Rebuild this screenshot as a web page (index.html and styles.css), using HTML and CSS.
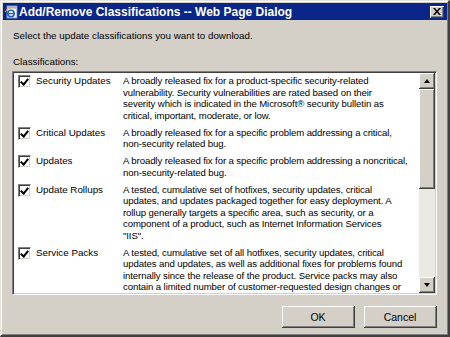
FILE: index.html
```html
<!DOCTYPE html>
<html lang="en">
<head>
    <meta charset="UTF-8">
    <title>Add/Remove Classifications -- Web Page Dialog</title>
    <link rel="stylesheet" href="styles.css">
</head>
<body>
    <div class="window">
        <div class="titlebar">
            <svg class="title-icon" width="15" height="14" viewBox="0 0 15 14">
                <rect x="3" y="1" width="10" height="12" fill="#fff" stroke="#7a8aa8"/>
                <rect x="3.5" y="1.5" width="9" height="2" fill="#9ab4dc"/>
                <circle cx="7" cy="8.5" r="3.2" fill="none" stroke="#1d5fc8" stroke-width="1.6"/>
                <path d="M4.2 8.6 H9.6" stroke="#1d5fc8" stroke-width="1.3"/>
                <path d="M1 7 C3 3 9 1 12 4" fill="none" stroke="#e8b020" stroke-width="1"/>
            </svg>
            <span class="title-text">Add/Remove Classifications -- Web Page Dialog</span>
            <button class="close-btn">
                <svg width="8" height="7" viewBox="0 0 8 7">
                    <path d="M0 0 L2 0 L4 2.5 L6 0 L8 0 L5 3.5 L8 7 L6 7 L4 4.5 L2 7 L0 7 L3 3.5 Z" fill="#000"/>
                </svg>
            </button>
        </div>
        <div class="dialog-body">
            <p class="intro">Select the update classifications you want to download.</p>
            <p class="list-label">Classifications:</p>
            <div class="listbox">
                <div class="list-rows">
                    <div class="row">
                        <span class="checkbox"></span>
                        <span class="row-name">Security Updates</span>
                        <span class="row-desc">A broadly released fix for a product-specific security-related<br>vulnerability. Security vulnerabilities are rated based on their<br>severity which is indicated in the Microsoft® security bulletin as<br>critical, important, moderate, or low.</span>
                    </div>
                    <div class="row">
                        <span class="checkbox"></span>
                        <span class="row-name">Critical Updates</span>
                        <span class="row-desc">A broadly released fix for a specific problem addressing a critical,<br>non-security related bug.</span>
                    </div>
                    <div class="row">
                        <span class="checkbox"></span>
                        <span class="row-name">Updates</span>
                        <span class="row-desc">A broadly released fix for a specific problem addressing a noncritical,<br>non-security-related bug.</span>
                    </div>
                    <div class="row">
                        <span class="checkbox"></span>
                        <span class="row-name">Update Rollups</span>
                        <span class="row-desc">A tested, cumulative set of hotfixes, security updates, critical<br>updates, and updates packaged together for easy deployment. A<br>rollup generally targets a specific area, such as security, or a<br>component of a product, such as Internet Information Services<br>"IIS".</span>
                    </div>
                    <div class="row">
                        <span class="checkbox"></span>
                        <span class="row-name">Service Packs</span>
                        <span class="row-desc">A tested, cumulative set of all hotfixes, security updates, critical<br>updates and updates, as well as additional fixes for problems found<br>internally since the release of the product. Service packs may also<br>contain a limited number of customer-requested design changes or</span>
                    </div>
                </div>
                <div class="scrollbar">
                    <div class="scroll-btn"><span class="arrow-up"></span></div>
                    <div class="scroll-thumb"></div>
                    <div class="scroll-track"></div>
                    <div class="scroll-btn"><span class="arrow-down"></span></div>
                </div>
            </div>
            <div class="buttons">
                <button class="dlg-btn">OK</button>
                <button class="dlg-btn">Cancel</button>
            </div>
        </div>
    </div>
</body>
</html>
```

FILE: styles.css
```css
body {
    margin: 0;
    background-color: #d4d0c8;
    font-family: "Liberation Sans", Arial, sans-serif;
    font-size: 9.8px;
    color: #000;
}
.window {
    width: 450px;
    height: 337px;
    box-sizing: border-box;
    display: flex;
    flex-direction: column;
    border-top: 1px solid #e6e4de;
    border-left: 1px solid #e6e4de;
    border-right: 2px solid #404040;
    border-bottom: 2px solid #404040;
    box-shadow: inset 1px 1px 0 #ffffff, inset -1px -1px 0 #808080;
    padding: 2px 0 0 2px;
}
.titlebar {
    height: 17px;
    background-color: #0a2689;
    display: flex;
    align-items: center;
    padding: 0 3px 0 1px;
    margin-right: 1px;
}
.title-icon {
    flex: none;
    margin-right: 0;
}
.title-text {
    flex: 1;
    color: #fff;
    font-weight: bold;
    font-size: 12px;
}
.close-btn {
    width: 14px;
    height: 12px;
    padding: 0;
    background-color: #d4d0c8;
    border: none;
    box-shadow: inset 1px 1px 0 #fff, inset -1px -1px 0 #404040, inset -2px -2px 0 #808080;
    display: flex;
    align-items: center;
    justify-content: center;
}
.dialog-body {
    flex: 1;
    display: flex;
    flex-direction: column;
    padding: 0 11px 0 9px;
}
.intro {
    margin: 10px 0 0 1px;
    line-height: 12px;
}
.list-label {
    margin: 14px 0 0 1px;
    line-height: 12px;
}
.listbox {
    height: 224px;
    box-sizing: border-box;
    margin-top: 3px;
    display: flex;
    background-color: #fff;
    border-top: 1px solid #808080;
    border-left: 1px solid #808080;
    border-right: 1px solid #fff;
    border-bottom: 1px solid #fff;
    box-shadow: inset 1px 1px 0 #404040, inset -1px -1px 0 #d4d0c8;
    padding: 1px;
}
.list-rows {
    flex: 1;
    overflow: hidden;
    padding: 2px 0 0 4px;
}
.row {
    display: flex;
    align-items: flex-start;
    line-height: 11.5px;
    margin-bottom: 5.5px;
}
.checkbox {
    flex: none;
    width: 13px;
    height: 13px;
    box-sizing: border-box;
    border-top: 1px solid #808080;
    border-left: 1px solid #808080;
    border-right: 1px solid #fff;
    border-bottom: 1px solid #fff;
    box-shadow: inset 1px 1px 0 #404040, inset -1px -1px 0 #d4d0c8;
    background-color: #fff;
    position: relative;
}
.checkbox::after {
    content: "";
    position: absolute;
    left: 3px;
    top: 1px;
    width: 3px;
    height: 6px;
    border-right: 2px solid #000;
    border-bottom: 2px solid #000;
    transform: rotate(40deg);
}
.row-name {
    flex: none;
    width: 87px;
    margin-left: 5px;
}
.row-desc {
    flex: none;
    width: 298px;
    white-space: nowrap;
    overflow: hidden;
    font-size: 9.6px;
    letter-spacing: -0.1px;
}
.scrollbar {
    flex: none;
    width: 16px;
    display: flex;
    flex-direction: column;
}
.scroll-btn {
    height: 16px;
    box-sizing: border-box;
    background-color: #d4d0c8;
    border-right: 1px solid #404040;
    border-bottom: 1px solid #404040;
    box-shadow: inset 1px 1px 0 #fff, inset -1px -1px 0 #808080;
    display: flex;
    align-items: center;
    justify-content: center;
}
.arrow-up {
    border-left: 3.5px solid transparent;
    border-right: 3.5px solid transparent;
    border-bottom: 4px solid #000;
}
.arrow-down {
    border-left: 3.5px solid transparent;
    border-right: 3.5px solid transparent;
    border-top: 4px solid #000;
}
.scroll-thumb {
    height: 100px;
    box-sizing: border-box;
    background-color: #d4d0c8;
    border-right: 1px solid #404040;
    border-bottom: 1px solid #404040;
    box-shadow: inset 1px 1px 0 #fff, inset -1px -1px 0 #808080;
}
.scroll-track {
    flex: 1;
    background-color: #ebe9e4;
}
.buttons {
    display: flex;
    justify-content: flex-end;
    gap: 9px;
    margin-top: 11px;
}
.dlg-btn {
    width: 73px;
    height: 22px;
    padding: 0;
    font-family: "Liberation Sans", Arial, sans-serif;
    font-size: 10.5px;
    color: #000;
    background-color: #d4d0c8;
    border: none;
    border-right: 1px solid #404040;
    border-bottom: 1px solid #404040;
    box-shadow: inset 1px 1px 0 #fff, inset -1px -1px 0 #808080;
}
```
